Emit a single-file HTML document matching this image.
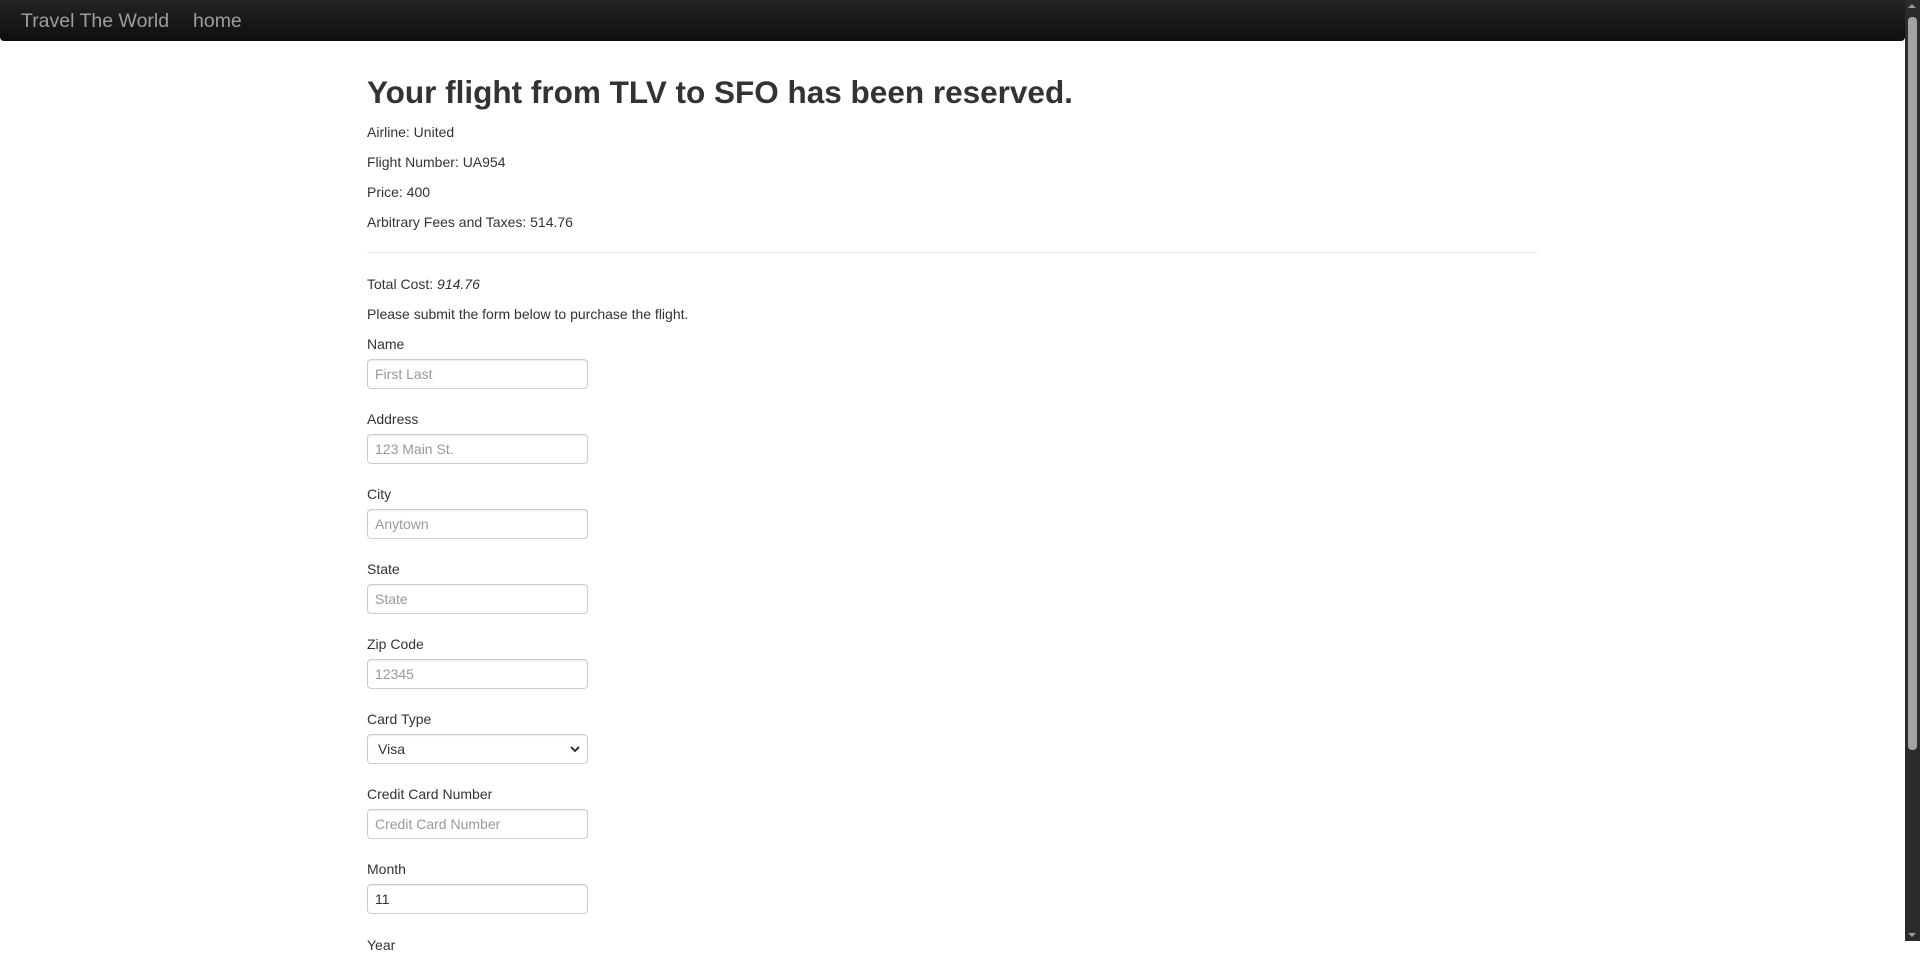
<!DOCTYPE html>
<html><head><meta charset="utf-8"><style>
*{box-sizing:border-box;margin:0;padding:0}
html,body{width:1920px;height:941px;overflow:hidden;background:#fff;font-family:"Liberation Sans",Arial,sans-serif;color:#333;font-size:14px}
.nav{position:absolute;left:0;top:0;width:1905px;height:41px;background:linear-gradient(#242424,#0e0e0e);border-radius:0 0 4px 4px}
.nav span{position:absolute;top:9px;font-size:19.5px;color:#9d9d9d;line-height:24px}
.t{position:absolute;left:367px;line-height:20px;white-space:nowrap}
h1{position:absolute;left:367px;top:72px;font-size:31.5px;font-weight:bold;line-height:40px;color:#333;white-space:nowrap}
hr{position:absolute;left:367px;top:252px;width:1171px;border:0;border-top:1px solid #eee}
.in{position:absolute;left:367px;width:221px;height:30px;border:1px solid #ccc;border-radius:4px;padding:0 7px;line-height:28px;color:#999;font-size:14px;box-shadow:inset 0 1px 1px rgba(0,0,0,.075)}
.sb{position:absolute;left:1905px;top:0;width:15px;height:941px;background:#2b2b2b}
.th{position:absolute;left:1908px;top:17px;width:9px;height:733px;background:#a3a3a3;border-radius:4px}
</style></head><body>
<div class="nav"><span style="left:21px">Travel The World</span><span style="left:193px">home</span></div>
<h1>Your flight from TLV to SFO has been reserved.</h1>
<div class="t" style="top:122px">Airline: United</div>
<div class="t" style="top:152px">Flight Number: UA954</div>
<div class="t" style="top:182px">Price: 400</div>
<div class="t" style="top:212px">Arbitrary Fees and Taxes: 514.76</div>
<hr>
<div class="t" style="top:274px">Total Cost: <i>914.76</i></div>
<div class="t" style="top:304px">Please submit the form below to purchase the flight.</div>
<div class="t" style="top:334px">Name</div>
<div class="in" style="top:359px">First Last</div>
<div class="t" style="top:409px">Address</div>
<div class="in" style="top:434px">123 Main St.</div>
<div class="t" style="top:484px">City</div>
<div class="in" style="top:509px">Anytown</div>
<div class="t" style="top:559px">State</div>
<div class="in" style="top:584px">State</div>
<div class="t" style="top:634px">Zip Code</div>
<div class="in" style="top:659px">12345</div>
<div class="t" style="top:709px">Card Type</div>
<div class="in" style="top:734px;color:#333;padding-left:10px">Visa<svg style="position:absolute;right:7px;top:10px" width="10" height="8" viewBox="0 0 10 8"><path d="M1 2l4 4 4-4" stroke="#333" stroke-width="2" fill="none"/></svg></div>
<div class="t" style="top:784px">Credit Card Number</div>
<div class="in" style="top:809px">Credit Card Number</div>
<div class="t" style="top:859px">Month</div>
<div class="in" style="top:884px;color:#333">11</div>
<div class="t" style="top:935px">Year</div>
<div class="sb"></div><div class="th"></div>
<div style="position:absolute;left:1908px;top:4px;width:0;height:0;border-left:4.5px solid transparent;border-right:4.5px solid transparent;border-bottom:4px solid #999"></div>
<div style="position:absolute;left:1908px;top:933px;width:0;height:0;border-left:4.5px solid transparent;border-right:4.5px solid transparent;border-top:4px solid #999"></div>
</body></html>
